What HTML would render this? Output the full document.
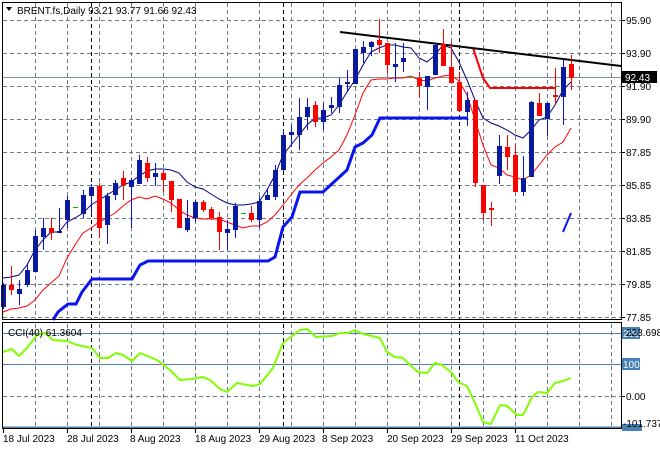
<!DOCTYPE html>
<html><head><meta charset="utf-8"><style>
html,body{margin:0;padding:0;background:#fff;}
svg{display:block;font-family:"Liberation Sans",sans-serif;}
</style></head><body>
<svg width="660" height="450" viewBox="0 0 660 450" xmlns="http://www.w3.org/2000/svg">
<rect width="660" height="450" fill="#fff"/>
<g stroke="#6e7b8b" stroke-width="1" stroke-dasharray="4,3" fill="none">
<path d="M3 20.5H621M3 53.5H621M3 86.5H621M3 119.5H621M3 152.5H621M3 185.5H621M3 218.5H621M3 251.5H621M3 284.5H621M3 317.5H621"/>
<path d="M35.5 3V319M67.5 3V319M99.5 3V319M131.5 3V319M163.5 3V319M195.5 3V319M227.5 3V319M259.5 3V319M291.5 3V319M323.5 3V319M355.5 3V319M387.5 3V319M419.5 3V319M451.5 3V319M483.5 3V319M515.5 3V319M547.5 3V319M579.5 3V319M611.5 3V319"/>
<path d="M35.5 324V428M67.5 324V428M99.5 324V428M131.5 324V428M163.5 324V428M195.5 324V428M227.5 324V428M259.5 324V428M291.5 324V428M323.5 324V428M355.5 324V428M387.5 324V428M419.5 324V428M451.5 324V428M483.5 324V428M515.5 324V428M547.5 324V428M579.5 324V428M611.5 324V428"/>
<path d="M3 396.5H621"/>
</g>
<g stroke="#000" stroke-width="1" stroke-dasharray="4,3">
<path d="M91.5 3V319M283.5 3V319M459.5 3V319M91.5 324V428M283.5 324V428M459.5 324V428"/>
</g>
<line x1="3" y1="77.5" x2="621" y2="77.5" stroke="#7f8c99" stroke-width="1"/>
<g stroke="#4f7fa8" stroke-width="1">
<path d="M3 333.5H621M3 364.5H621"/>
</g>
<line x1="3" y1="427.5" x2="621" y2="427.5" stroke="#4f7fa8" stroke-width="2"/>
<polyline fill="none" stroke="#0a14f0" stroke-width="3" points="53,320 58,312 68,304 76,304 82,292 92,279 132,279 140,265 148,261 268,261 275,257 283,227 292,217 300,192 323,192 347,170 355,147 363,143 372,135 380,118 467,118"/>
<polyline fill="none" stroke="#0a14f0" stroke-width="2" points="563,232 571,213"/>
<polyline fill="none" stroke="#f00" stroke-width="2" points="473,48 483,78 490,88 555,88"/>
<polyline fill="none" stroke="#f00" stroke-width="1" points="3,312 11,309 19,308 27,306 35,300 43,290 51,283 59,276 67,258 75,245 83,233 91,228 99,222 107,218 115,213 123,206 131,200 139,197 147,199 155,196 163,199 171,203 179,210 187,215 195,218 203,219 211,219 219,219 227,222 235,225 243,228 251,226 259,226 267,222 275,215 283,205 291,195 299,185 307,178 315,170 323,163 331,157 339,150 347,135 355,115 363,93 371,80 379,79 387,79 395,78 403,78 411,76 419,80 427,81 435,78 443,76 451,75 459,81 467,95 475,120 483,145 491,165 499,168 507,175 515,177 523,180 531,175 539,165 547,155 555,147 563,142 571,128"/>
<polyline fill="none" stroke="#000080" stroke-width="1" points="3,278 11,277 19,275 27,265 35,250 43,240 51,232 59,232 67,222 75,218 83,213 91,205 99,200 107,195 115,190 123,185 131,182 139,176 147,171 155,169 163,169 171,170 179,173 187,182 195,187 203,189 211,194 219,199 227,203 235,205 243,205 251,204 259,202 267,190 275,175 283,155 291,145 299,135 307,125 315,118 323,118 331,115 339,105 347,92 355,80 363,65 371,52 379,48 387,45 395,45 403,47 411,48 419,58 427,62 435,55 443,45 451,48 459,62 467,80 475,100 483,118 491,123 499,126 507,130 515,135 523,138 531,130 539,120 547,117 555,105 563,90 571,82"/>
<line x1="340" y1="32" x2="621" y2="66" stroke="#000" stroke-width="2"/>
<g stroke-width="1">
<g stroke="#0a14d0" fill="#0a14a0">
<path d="M3.5 283V309M19.5 280V305M27.5 263V287M35.5 230V272M43.5 218V250M59.5 208V233M67.5 196V228M83.5 190V218M91.5 184V215M107.5 193V244M115.5 180V200M131.5 178V228M139.5 155V184M155.5 163V186M187.5 200V232M195.5 200V222M227.5 220V250M235.5 203V238M259.5 196V228M267.5 188V200M275.5 165V200M283.5 130V172M291.5 125V147M299.5 98V150M307.5 98V130M323.5 103V130M331.5 97V113M339.5 78V113M347.5 70V92M355.5 49V84M363.5 41V63M371.5 41V56M395.5 43V82M403.5 43V72M427.5 76V110M435.5 45V75M467.5 92V126M499.5 135V184M523.5 156V196M531.5 101V177M547.5 102V136M563.5 60V125"/>
</g>
<g fill="#0a1aa0">
<rect x="1" y="285" width="5" height="22"/><rect x="17" y="289" width="5" height="5"/><rect x="25" y="270" width="5" height="15"/><rect x="33" y="236" width="5" height="36"/><rect x="41" y="228" width="5" height="9"/><rect x="57" y="231" width="5" height="2"/><rect x="65" y="200" width="5" height="20"/><rect x="81" y="195" width="5" height="19"/><rect x="89" y="187" width="5" height="9"/><rect x="105" y="196" width="5" height="29"/><rect x="113" y="183" width="5" height="12"/><rect x="129" y="180" width="5" height="7"/><rect x="137" y="160" width="5" height="24"/><rect x="153" y="173" width="5" height="4"/><rect x="185" y="218" width="5" height="12"/><rect x="193" y="202" width="5" height="16"/><rect x="225" y="229" width="5" height="4"/><rect x="233" y="206" width="5" height="24"/><rect x="257" y="201" width="5" height="19"/><rect x="265" y="195" width="5" height="5"/><rect x="273" y="170" width="5" height="27"/><rect x="281" y="135" width="5" height="35"/><rect x="289" y="132" width="5" height="3"/><rect x="297" y="117" width="5" height="18"/><rect x="305" y="107" width="5" height="10"/><rect x="321" y="110" width="5" height="12"/><rect x="329" y="105" width="5" height="3"/><rect x="337" y="85" width="5" height="22"/><rect x="345" y="82" width="5" height="2"/><rect x="353" y="49" width="5" height="35"/><rect x="361" y="47" width="5" height="6"/><rect x="369" y="42" width="5" height="5"/><rect x="393" y="64" width="5" height="3"/><rect x="401" y="58" width="5" height="4"/><rect x="425" y="76" width="5" height="11"/><rect x="433" y="45" width="5" height="30"/><rect x="465" y="100" width="5" height="12"/><rect x="497" y="146" width="5" height="30"/><rect x="521" y="178" width="5" height="14"/><rect x="529" y="102" width="5" height="75"/><rect x="545" y="103" width="5" height="16"/><rect x="561" y="67" width="5" height="30"/>
</g>
<g stroke="#f00">
<path d="M11.5 266V295M51.5 218V240M99.5 183V238M123.5 171V200M147.5 157V182M163.5 170V192M171.5 181V212M179.5 199V228M203.5 200V212M211.5 207V220M219.5 212V250M251.5 206V222M315.5 101V127M379.5 19V53M387.5 43V73M419.5 72V98M443.5 29V66M451.5 42V83M459.5 72V111M475.5 100V187M483.5 185V220M491.5 202V226M507.5 135V170M515.5 145V192M539.5 93V116M555.5 68V105M571.5 55V90"/>
</g>
<g fill="#f00">
<rect x="9" y="285" width="5" height="5"/><rect x="49" y="228" width="5" height="5"/><rect x="97" y="186" width="5" height="42"/><rect x="121" y="178" width="5" height="7"/><rect x="145" y="163" width="5" height="15"/><rect x="161" y="173" width="5" height="7"/><rect x="169" y="181" width="5" height="19"/><rect x="177" y="199" width="5" height="29"/><rect x="201" y="202" width="5" height="8"/><rect x="209" y="209" width="5" height="9"/><rect x="217" y="217" width="5" height="15"/><rect x="249" y="213" width="5" height="7"/><rect x="313" y="105" width="5" height="17"/><rect x="377" y="40" width="5" height="5"/><rect x="385" y="43" width="5" height="22"/><rect x="417" y="78" width="5" height="8"/><rect x="441" y="44" width="5" height="22"/><rect x="449" y="67" width="5" height="16"/><rect x="457" y="82" width="5" height="29"/><rect x="473" y="100" width="5" height="83"/><rect x="481" y="185" width="5" height="28"/><rect x="489" y="208" width="5" height="2"/><rect x="505" y="147" width="5" height="10"/><rect x="513" y="155" width="5" height="37"/><rect x="537" y="103" width="5" height="13"/><rect x="553" y="95" width="5" height="2"/><rect x="569" y="64" width="5" height="14"/>
</g>
<g stroke="#00c000" stroke-width="1"><path d="M73 207.5H78M241 213.5H246M409 77.5H414"/></g>
</g>
<polyline fill="none" stroke="#7fff00" stroke-width="2" stroke-linejoin="round" points="3,352 12,349 19,356 27,348 37,335 45,333 53,340 67,341 77,345 92,348 100,358 108,358 116,353 123,355 132,361 140,353 157,360 170,370 180,380 192,379 203,377 210,380 220,389 227,392 237,383 253,386 260,384 273,368 283,343 300,330 307,329 316,337 332,336 340,333 348,333 355,330 363,334 372,336 380,338 387,352 395,357 403,358 410,365 418,372 427,373 435,363 442,365 452,373 458,382 467,386 475,403 483,422 491,424 500,405 507,406 517,415 523,415 532,397 538,392 547,393 555,383 563,381 571,378"/>
<rect x="2.5" y="2.5" width="619" height="317" fill="none" stroke="#000" stroke-width="1"/>
<rect x="2.5" y="322.5" width="619" height="106" fill="none" stroke="#000" stroke-width="1"/>
<path d="M6 7L12 7L9 11Z" fill="#000"/>
<text x="17" y="14" font-size="10" fill="#000">BRENT.fs,Daily 93.21 93.77 91.66 92.43</text>
<text x="8" y="336" font-size="10" fill="#000">CCI(40) 61.3604</text>
<g font-size="10" fill="#000">
<path d="M621 20.5h4M621 53.5h4M621 86.5h4M621 119.5h4M621 152.5h4M621 185.5h4M621 218.5h4M621 251.5h4M621 284.5h4M621 317.5h4M621 396.5h4" stroke="#000"/>
<text x="626" y="24">95.90</text>
<text x="626" y="57">93.90</text>
<text x="626" y="90">91.90</text>
<text x="626" y="123">89.90</text>
<text x="626" y="156">87.85</text>
<text x="626" y="189">85.85</text>
<text x="626" y="222">83.85</text>
<text x="626" y="255">81.85</text>
<text x="626" y="288">79.85</text>
<text x="626" y="321">77.85</text>
<rect x="622" y="71" width="35" height="12" fill="#000"/>
<text x="625" y="81" fill="#fff">92.43</text>
<rect x="622" y="327" width="18" height="12" fill="#4682b4"/>
<text x="623" y="337" fill="#fff">200</text>
<text x="626" y="336">228.6987</text>
<rect x="622" y="358" width="18" height="12" fill="#4682b4"/>
<text x="623" y="368" fill="#fff">100</text>
<text x="626" y="400">0.00</text>
<rect x="622" y="424" width="20" height="7" fill="#4682b4"/>
<text x="623" y="427">-101.737</text>
</g>
<g font-size="10" fill="#000">
<path d="M3.5 429v4M67.5 429v4M131.5 429v4M195.5 429v4M259.5 429v4M323.5 429v4M387.5 429v4M451.5 429v4M515.5 429v4" stroke="#000"/>
<text x="3" y="442">18 Jul 2023</text>
<text x="67" y="442">28 Jul 2023</text>
<text x="130" y="442">8 Aug 2023</text>
<text x="195" y="442">18 Aug 2023</text>
<text x="259" y="442">29 Aug 2023</text>
<text x="322" y="442">8 Sep 2023</text>
<text x="387" y="442">20 Sep 2023</text>
<text x="451" y="442">29 Sep 2023</text>
<text x="515" y="442">11 Oct 2023</text>
</g>
</svg>
</body></html>
